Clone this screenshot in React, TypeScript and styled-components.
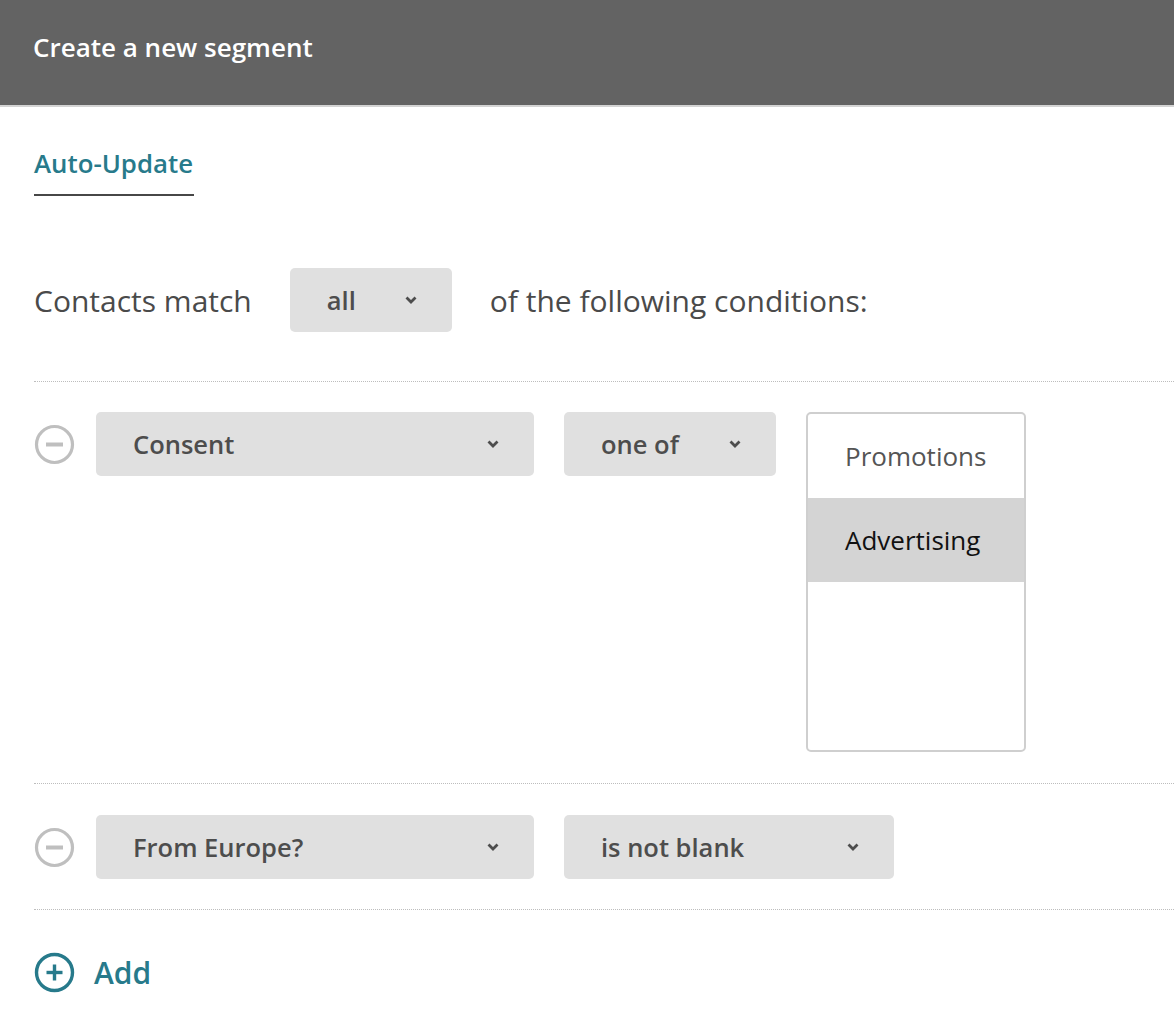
import React from "react";
import styled, { createGlobalStyle } from "styled-components";

const Global = createGlobalStyle`
  html, body { margin: 0; padding: 0; background: #fff; }
  body { font-family: "Open Sans", "Noto Sans", sans-serif; }
  * { box-sizing: border-box; }
`;

const Page = styled.div`
  width: 1174px;
  min-height: 1032px;
  background: #fff;
`;

const Header = styled.header`
  height: 107px;
  background: #636363;
  border-bottom: 2px solid #d3d3d3;
  display: flex;
  align-items: center;
  padding: 0 0 12px 33px;
  color: #fff;
  font-size: 26px;
  font-weight: 600;
`;

const Body = styled.div`
  padding: 0 0 0 34px;
`;

const Tabs = styled.div`
  display: flex;
  padding-top: 41px;
`;

const Tab = styled.div`
  color: #277a8b;
  font-size: 25.8px;
  font-weight: 600;
  padding: 0 1px 15px 0;
  border-bottom: 2px solid #474747;
  line-height: 31px;
`;

const MatchRow = styled.div`
  display: flex;
  align-items: center;
  margin-top: 72px;
  height: 64px;
  font-size: 30px;
  color: #4a4a4a;
`;

const MatchLabel = styled.span`
  margin-right: 38px;
`;

const MatchSuffix = styled.span`
  margin-left: 38px;
`;

const Select = styled.div<{ $w: number }>`
  width: ${(p) => p.$w}px;
  height: 64px;
  flex: none;
  background: #e0e0e0;
  border-radius: 5px;
  display: flex;
  align-items: center;
  justify-content: space-between;
  padding: 0 34px 0 37px;
  font-size: 25.5px;
  font-weight: 600;
  color: #4d4d4d;
`;

const Spacer = styled.div`
  height: 49px;
`;

const Divider = styled.div`
  border-top: 1px dotted #bdbdbd;
  height: 0;
`;

const ConditionRow = styled.div<{ $top: number; $bottom: number }>`
  display: flex;
  align-items: flex-start;
  padding: ${(p) => p.$top}px 0 ${(p) => p.$bottom}px 0;
  gap: 30px;
`;

const IconSlot = styled.div`
  width: 41px;
  height: 64px;
  margin-right: -9px;
  flex: none;
  display: flex;
  align-items: center;
`;

const ListBox = styled.div`
  width: 220px;
  height: 340px;
  border: 2px solid #cfcfcf;
  border-radius: 5px;
  display: flex;
  flex-direction: column;
  overflow: hidden;
`;

const Option = styled.div<{ $selected?: boolean }>`
  height: 84px;
  flex: none;
  display: flex;
  align-items: center;
  padding-left: 37px;
  font-size: 26px;
  color: ${(p) => (p.$selected ? "#111" : "#555")};
  background: ${(p) => (p.$selected ? "#d4d4d4" : "transparent")};
`;

const AddRow = styled.div`
  display: flex;
  align-items: center;
  gap: 19px;
  padding-top: 42px;
  color: #277a8b;
  font-size: 30px;
  font-weight: 600;
`;

const Chevron = () => (
  <svg width="14" height="10" viewBox="0 0 14 10">
    <path d="M2.5 2.5 L7 7 L11.5 2.5" fill="none" stroke="#4d4d4d" strokeWidth="2.8" strokeLinecap="butt" />
  </svg>
);

const MinusIcon = () => (
  <svg width="41" height="41" viewBox="0 0 41 41">
    <circle cx="20.5" cy="20.5" r="18" fill="none" stroke="#bfbfbf" strokeWidth="3.2" />
    <rect x="12" y="18.5" width="17" height="4" fill="#bfbfbf" />
  </svg>
);

const PlusIcon = () => (
  <svg width="41" height="41" viewBox="0 0 41 41">
    <circle cx="20.5" cy="20.5" r="18" fill="none" stroke="#277a8b" strokeWidth="3.4" />
    <rect x="12.5" y="18.8" width="16" height="3.4" fill="#277a8b" />
    <rect x="18.8" y="12.5" width="3.4" height="16" fill="#277a8b" />
  </svg>
);

const Dropdown = ({ label, w }: { label: string; w: number }) => (
  <Select $w={w}>
    <span>{label}</span>
    <Chevron />
  </Select>
);

export default function App() {
  return (
    <Page>
      <Global />
      <Header>Create a new segment</Header>
      <Body>
        <Tabs>
          <Tab>Auto-Update</Tab>
        </Tabs>
        <MatchRow>
          <MatchLabel>Contacts match</MatchLabel>
          <Dropdown label="all" w={162} />
          <MatchSuffix>of the following conditions:</MatchSuffix>
        </MatchRow>
        <Spacer />
        <Divider />
        <ConditionRow $top={30} $bottom={31}>
          <IconSlot>
            <MinusIcon />
          </IconSlot>
          <Dropdown label="Consent" w={438} />
          <Dropdown label="one of" w={212} />
          <ListBox>
            <Option>Promotions</Option>
            <Option $selected>Advertising</Option>
          </ListBox>
        </ConditionRow>
        <Divider />
        <ConditionRow $top={31} $bottom={30}>
          <IconSlot>
            <MinusIcon />
          </IconSlot>
          <Dropdown label="From Europe?" w={438} />
          <Dropdown label="is not blank" w={330} />
        </ConditionRow>
        <Divider />
        <AddRow>
          <PlusIcon />
          <span>Add</span>
        </AddRow>
      </Body>
    </Page>
  );
}
